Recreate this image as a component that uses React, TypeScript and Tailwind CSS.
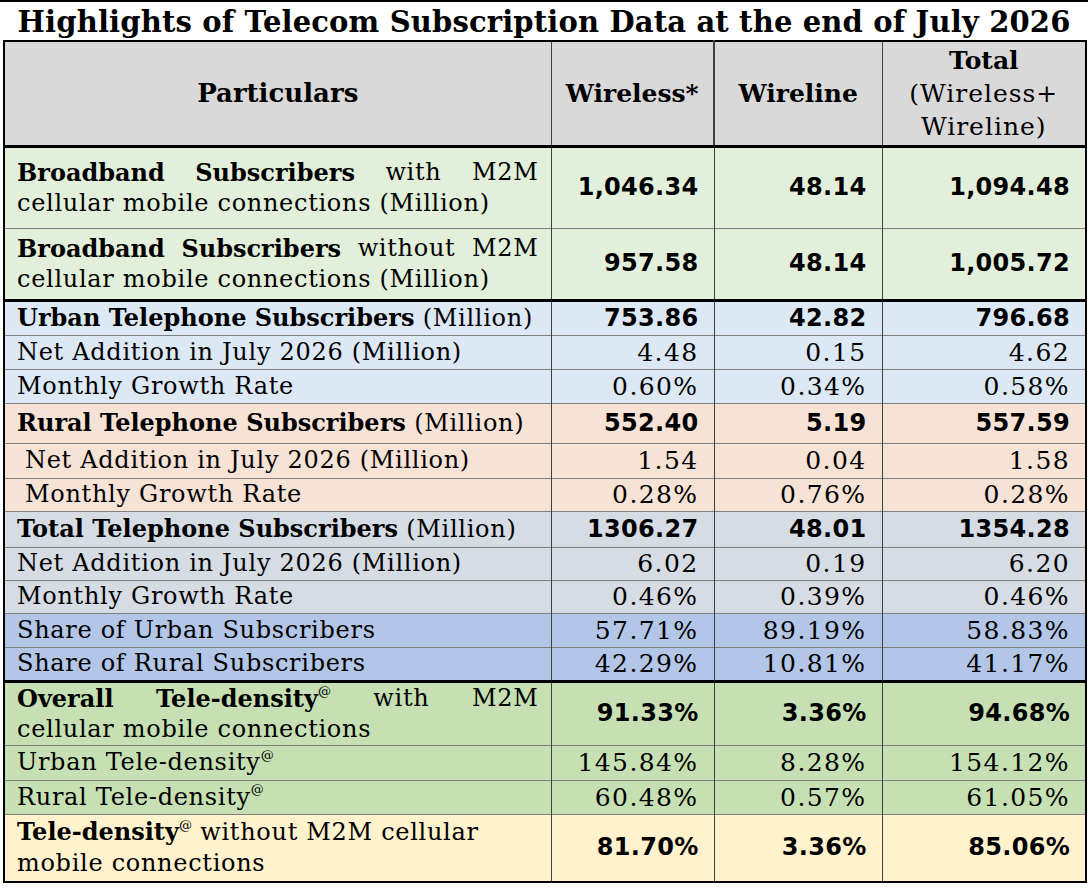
import React from 'react';

type Row = {
    label: React.ReactNode;
    values: string[];
    boldValues?: boolean;
    bg: string;
    h: string;
    thickTop?: boolean;
    indent?: boolean;
};

const At = () => <sup className="text-[13px] align-[4px] font-normal tracking-normal">@</sup>;
const AtBold = () => <sup className="text-[13px] align-[4px] font-normal tracking-normal">@</sup>;

const B = ({ children }: { children: React.ReactNode }) => (
    <b className="tracking-normal">{children}</b>
);

const Spread = ({ children }: { children: React.ReactNode }) => (
    <div className="flex justify-between">{children}</div>
);

const rows: Row[] = [
    {
        label: (
            <>
                <Spread>
                    <B>Broadband</B>
                    <B>Subscribers</B>
                    <span>with</span>
                    <span>M2M</span>
                </Spread>
                <div>cellular mobile connections (Million)</div>
            </>
        ),
        values: ['1,046.34', '48.14', '1,094.48'],
        boldValues: true,
        bg: 'bg-[#e2efda]',
        h: 'h-[82px]',
        thickTop: true,
    },
    {
        label: (
            <>
                <Spread>
                    <B>Broadband</B>
                    <B>Subscribers</B>
                    <span>without</span>
                    <span>M2M</span>
                </Spread>
                <div>cellular mobile connections (Million)</div>
            </>
        ),
        values: ['957.58', '48.14', '1,005.72'],
        boldValues: true,
        bg: 'bg-[#e2efda]',
        h: 'h-[72px]',
    },
    {
        label: <><B>Urban Telephone Subscribers</B> (Million)</>,
        values: ['753.86', '42.82', '796.68'],
        boldValues: true,
        bg: 'bg-[#dde8f5]',
        h: 'h-[35px]',
        thickTop: true,
    },
    { label: 'Net Addition in July 2026 (Million)', values: ['4.48', '0.15', '4.62'], bg: 'bg-[#dde8f5]', h: 'h-[34px]' },
    { label: 'Monthly Growth Rate', values: ['0.60%', '0.34%', '0.58%'], bg: 'bg-[#dde8f5]', h: 'h-[34px]' },
    {
        label: <><B>Rural Telephone Subscribers</B> (Million)</>,
        values: ['552.40', '5.19', '557.59'],
        boldValues: true,
        bg: 'bg-[#f7e2d6]',
        h: 'h-[40px]',
    },
    { label: 'Net Addition in July 2026 (Million)', values: ['1.54', '0.04', '1.58'], bg: 'bg-[#f7e2d6]', h: 'h-[35px]', indent: true },
    { label: 'Monthly Growth Rate', values: ['0.28%', '0.76%', '0.28%'], bg: 'bg-[#f7e2d6]', h: 'h-[33px]', indent: true },
    {
        label: <><B>Total Telephone Subscribers</B> (Million)</>,
        values: ['1306.27', '48.01', '1354.28'],
        boldValues: true,
        bg: 'bg-[#d6dce4]',
        h: 'h-[36px]',
    },
    { label: 'Net Addition in July 2026 (Million)', values: ['6.02', '0.19', '6.20'], bg: 'bg-[#d6dce4]', h: 'h-[33px]' },
    { label: 'Monthly Growth Rate', values: ['0.46%', '0.39%', '0.46%'], bg: 'bg-[#d6dce4]', h: 'h-[33px]' },
    { label: 'Share of Urban Subscribers', values: ['57.71%', '89.19%', '58.83%'], bg: 'bg-[#b4c6e7]', h: 'h-[34px]' },
    { label: 'Share of Rural Subscribers', values: ['42.29%', '10.81%', '41.17%'], bg: 'bg-[#b4c6e7]', h: 'h-[34px]' },
    {
        label: (
            <>
                <Spread>
                    <B>Overall</B>
                    <B>Tele-density<AtBold /></B>
                    <span>with</span>
                    <span>M2M</span>
                </Spread>
                <div>cellular mobile connections</div>
            </>
        ),
        values: ['91.33%', '3.36%', '94.68%'],
        boldValues: true,
        bg: 'bg-[#c6e0b4]',
        h: 'h-[63px]',
        thickTop: true,
    },
    { label: <>Urban Tele-density<At /></>, values: ['145.84%', '8.28%', '154.12%'], bg: 'bg-[#c6e0b4]', h: 'h-[35px]' },
    { label: <>Rural Tele-density<At /></>, values: ['60.48%', '0.57%', '61.05%'], bg: 'bg-[#c6e0b4]', h: 'h-[34px]' },
    {
        label: (
            <>
                <div><B>Tele-density<AtBold /></B> without M2M cellular</div>
                <div>mobile connections</div>
            </>
        ),
        values: ['81.70%', '3.36%', '85.06%'],
        boldValues: true,
        bg: 'bg-[#fff2cc]',
        h: 'h-[68px]',
    },
];

export default function App() {
    return (
        <div className="w-[1088px] h-[890px] bg-white font-['DejaVu_Serif',serif] text-black">
            {/* Title */}
            <div className="border-t-2 border-black h-[40px] flex items-center justify-center">
                <h1 className="text-[29px] font-bold leading-none pt-[2px] tracking-[0.15px]">
                    Highlights of Telecom Subscription Data at the end of July 2026
                </h1>
            </div>

            <table className="ml-[3px] w-[1082px] table-fixed border-collapse border-[2px] border-black text-[24px] leading-[31px] tracking-[0.7px]">
                <colgroup>
                    <col className="w-[547px]" />
                    <col className="w-[163px]" />
                    <col className="w-[168px]" />
                    <col className="w-[204px]" />
                </colgroup>
                <thead>
                    <tr className="h-[105px] bg-[#d9d9d9] border-b-[3px] border-black">
                        <th className="border-r border-[#404040] text-center text-[26px] tracking-normal">Particulars</th>
                        <th className="border-r-2 border-[#404040] text-center text-[25px] tracking-normal">Wireless*</th>
                        <th className="border-r border-[#404040] text-center text-[25px] tracking-normal">Wireline</th>
                        <th className="text-center text-[25px] leading-[33px]">
                            <div className="font-bold tracking-normal">Total</div>
                            <div className="font-normal tracking-[1px]">(Wireless+</div>
                            <div className="font-normal tracking-[1px]">Wireline)</div>
                        </th>
                    </tr>
                </thead>
                <tbody>
                    {rows.map((row, i) => (
                        <tr
                            key={i}
                            className={`${row.bg} ${row.h} ${row.thickTop ? 'border-t-[3px] border-t-black' : 'border-t border-t-[#7f7f7f]'}`}
                        >
                            <td className={`border-r border-r-[#404040] align-middle pr-[12px] whitespace-nowrap ${row.indent ? 'pl-[20px]' : 'pl-[12px]'}`}>
                                {row.label}
                            </td>
                            {row.values.map((v, j) => (
                                <td
                                    key={j}
                                    className={`align-middle text-right pr-[15px] ${j < 2 ? 'border-r border-r-[#404040]' : ''} ${
                                        row.boldValues
                                            ? "font-['DejaVu_Sans',sans-serif] font-bold text-[24px] tracking-[0.3px]"
                                            : 'text-[25px] tracking-[1.4px]'
                                    }`}
                                >
                                    {v}
                                </td>
                            ))}
                        </tr>
                    ))}
                </tbody>
            </table>
        </div>
    );
}
